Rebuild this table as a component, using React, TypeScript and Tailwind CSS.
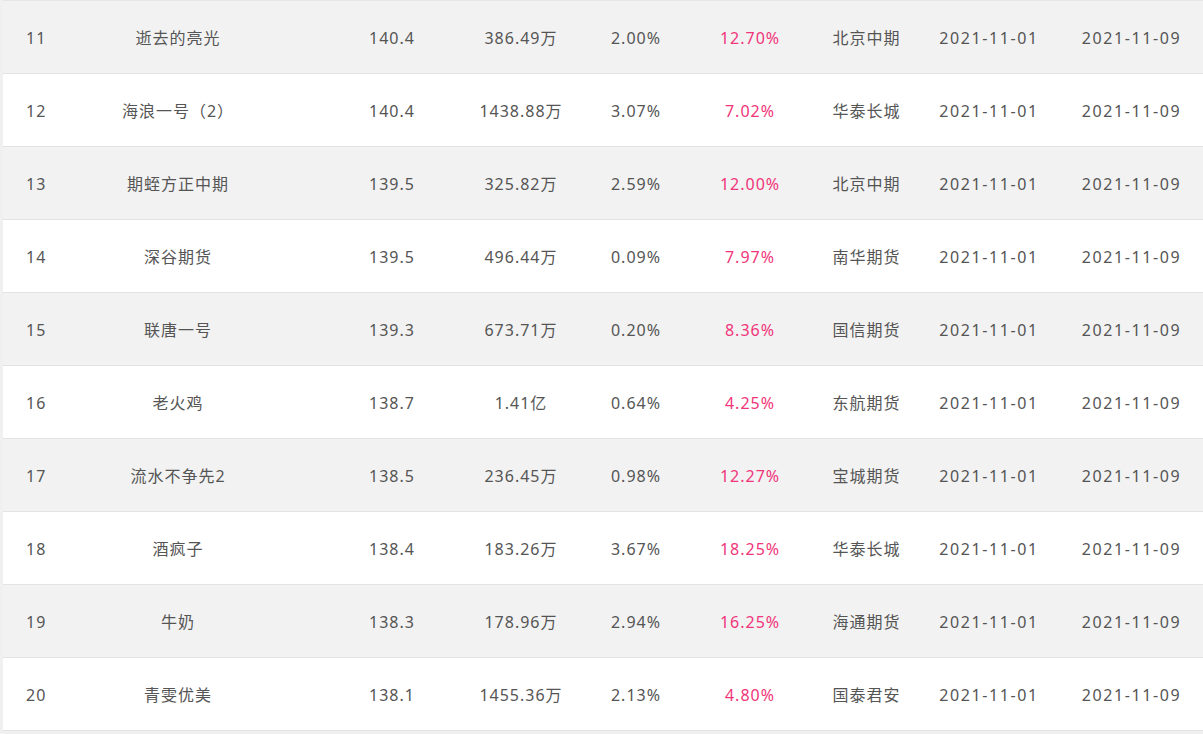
const rows = [
  { no: 11, name: '逝去的亮光', score: '140.4', equity: '386.49万', ret: '2.00%', dd: '12.70%', broker: '北京中期', start: '2021-11-01', end: '2021-11-09' },
  { no: 12, name: '海浪一号（2）', score: '140.4', equity: '1438.88万', ret: '3.07%', dd: '7.02%', broker: '华泰长城', start: '2021-11-01', end: '2021-11-09' },
  { no: 13, name: '期蛭方正中期', score: '139.5', equity: '325.82万', ret: '2.59%', dd: '12.00%', broker: '北京中期', start: '2021-11-01', end: '2021-11-09' },
  { no: 14, name: '深谷期货', score: '139.5', equity: '496.44万', ret: '0.09%', dd: '7.97%', broker: '南华期货', start: '2021-11-01', end: '2021-11-09' },
  { no: 15, name: '联唐一号', score: '139.3', equity: '673.71万', ret: '0.20%', dd: '8.36%', broker: '国信期货', start: '2021-11-01', end: '2021-11-09' },
  { no: 16, name: '老火鸡', score: '138.7', equity: '1.41亿', ret: '0.64%', dd: '4.25%', broker: '东航期货', start: '2021-11-01', end: '2021-11-09' },
  { no: 17, name: '流水不争先2', score: '138.5', equity: '236.45万', ret: '0.98%', dd: '12.27%', broker: '宝城期货', start: '2021-11-01', end: '2021-11-09' },
  { no: 18, name: '酒疯子', score: '138.4', equity: '183.26万', ret: '3.67%', dd: '18.25%', broker: '华泰长城', start: '2021-11-01', end: '2021-11-09' },
  { no: 19, name: '牛奶', score: '138.3', equity: '178.96万', ret: '2.94%', dd: '16.25%', broker: '海通期货', start: '2021-11-01', end: '2021-11-09' },
  { no: 20, name: '青雯优美', score: '138.1', equity: '1455.36万', ret: '2.13%', dd: '4.80%', broker: '国泰君安', start: '2021-11-01', end: '2021-11-09' },
];

export default function App() {
  return (
    <div
      className="min-h-screen bg-[#f0f0f0] pl-[3px] text-[16px] text-[#555] tracking-[1px]"
      style={{ fontFamily: '"Noto Sans", "Noto Sans CJK SC", sans-serif' }}
    >
      <div className="border-t border-[#e6e6e6]">
        {rows.map((r, i) => (
          <div
            key={r.no}
            className={`grid h-[73px] grid-cols-[97px_190px_170px_120px_112px_116px_117px_135px_143px] items-center border-b border-[#e3e3e6] pt-[2px] ${
              i % 2 === 0 ? 'bg-[#f2f2f2]' : 'bg-white'
            }`}
          >
            <div className="pl-[23px]">{r.no}</div>
            <div className="pr-[34px] text-center">{r.name}</div>
            <div className="pl-[34px] text-center">{r.score}</div>
            <div className="pl-[2px] text-center">{r.equity}</div>
            <div className="text-center">{r.ret}</div>
            <div className="text-center text-[#f0357a]">{r.dd}</div>
            <div className="text-center">{r.broker}</div>
            <div className="pr-[7px] text-center tracking-[1.6px]">{r.start}</div>
            <div className="text-center tracking-[1.6px]">{r.end}</div>
          </div>
        ))}
      </div>
    </div>
  );
}
